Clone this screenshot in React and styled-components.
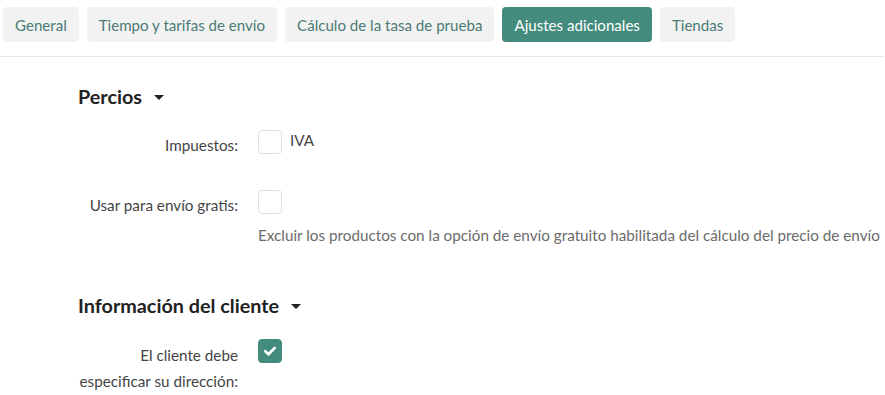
import React from "react";
import styled, { createGlobalStyle } from "styled-components";

const Global = createGlobalStyle`
  html, body { margin: 0; padding: 0; background: #fff; }
  body { font-family: Lato, "Liberation Sans", sans-serif; color: #333; }
  * { box-sizing: border-box; }
`;

const Page = styled.div`
  width: 885px;
  height: 395px;
  overflow: hidden;
`;

const TabBar = styled.nav`
  display: flex;
  gap: 8px;
  padding: 7px 3px 14px 3px;
  border-bottom: 1px solid #e6e6e6;
  margin-right: 1px;
`;

const Tab = styled.button`
  font-family: inherit;
  font-size: 15.1px;
  height: 35px;
  padding: 0 12px;
  border: none;
  border-radius: 4px;
  cursor: pointer;
  background: ${(p) => (p.$active ? "#438b7c" : "#f2f2f2")};
  color: ${(p) => (p.$active ? "#ffffff" : "#4b7a76")};
`;

const Content = styled.div`
  padding: 26px 0 0 78px;
`;

const Section = styled.section`
  margin-bottom: 47px;
`;

const SectionTitle = styled.h2`
  display: flex;
  align-items: center;
  gap: 12px;
  margin: 0 0 21px 0;
  font-size: 19.8px;
  font-weight: 700;
  color: #222;
  line-height: 26px;
`;

const Caret = styled.span`
  width: 0;
  height: 0;
  border-left: 5px solid transparent;
  border-right: 5px solid transparent;
  border-top: 5px solid #222;
  margin-top: 2px;
`;

const Row = styled.div`
  display: grid;
  grid-template-columns: 160px 1fr;
  column-gap: 20px;
  margin-bottom: ${(p) => p.$gap || 0}px;
`;

const Label = styled.label`
  text-align: right;
  font-size: 15.25px;
  line-height: 26px;
  color: #444;
  padding-top: ${(p) => p.$pt || 0}px;
`;

const Control = styled.div`
  display: flex;
  flex-direction: column;
  gap: 11px;
`;

const CheckLine = styled.div`
  display: flex;
  align-items: flex-start;
  gap: 8px;
  font-size: 15.25px;
  color: #444;
  line-height: 20px;
`;

const Box = styled.span`
  width: 24px;
  height: 24px;
  border-radius: 4px;
  border: 1px solid ${(p) => (p.$checked ? "#438b7c" : "#dedede")};
  background: ${(p) => (p.$checked ? "#438b7c" : "#fff")};
  display: inline-flex;
  align-items: center;
  justify-content: center;
  flex-shrink: 0;
`;

const Help = styled.div`
  font-size: 15.25px;
  color: #6b6b6b;
  line-height: 20px;
`;

const Check = () => (
  <svg width="14" height="14" viewBox="0 0 14 14">
    <path d="M2.3 7.3 L5.5 10.3 L11.7 3.9" fill="none" stroke="#fff" strokeWidth="2.8" strokeLinecap="round" strokeLinejoin="round" />
  </svg>
);

export default function App() {
  const tabs = ["General", "Tiempo y tarifas de envío", "Cálculo de la tasa de prueba", "Ajustes adicionales", "Tiendas"];
  return (
    <Page>
      <Global />
      <TabBar>
        {tabs.map((t) => (
          <Tab key={t} $active={t === "Ajustes adicionales"}>{t}</Tab>
        ))}
      </TabBar>
      <Content>
        <Section>
          <SectionTitle>Percios <Caret /></SectionTitle>
          <Row $gap={32}>
            <Label $pt={2}>Impuestos:</Label>
            <Control>
              <CheckLine><Box /> IVA</CheckLine>
            </Control>
          </Row>
          <Row>
            <Label $pt={2}>Usar para envío gratis:</Label>
            <Control>
              <CheckLine><Box /></CheckLine>
              <Help>Excluir los productos con la opción de envío gratuito habilitada del cálculo del precio de envío</Help>
            </Control>
          </Row>
        </Section>
        <Section>
          <SectionTitle>Información del cliente <Caret /></SectionTitle>
          <Row>
            <Label $pt={3}>El cliente debe especificar su dirección:</Label>
            <Control>
              <CheckLine><Box $checked><Check /></Box></CheckLine>
            </Control>
          </Row>
        </Section>
      </Content>
    </Page>
  );
}
